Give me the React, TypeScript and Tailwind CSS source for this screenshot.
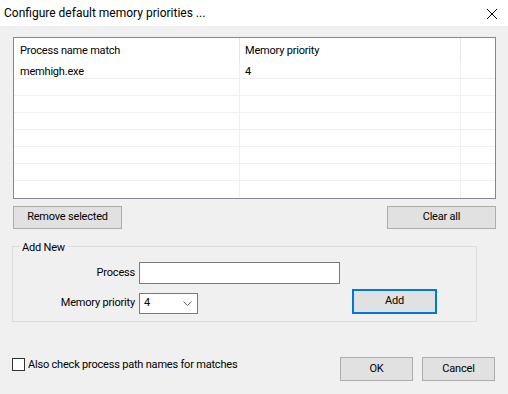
import React from "react";

const rows = [
  { name: "memhigh.exe", prio: "4" },
  { name: "", prio: "" },
  { name: "", prio: "" },
  { name: "", prio: "" },
  { name: "", prio: "" },
  { name: "", prio: "" },
  { name: "", prio: "" },
];

function Button({ label, className = "" }: { label: string; className?: string }) {
  return (
    <button
      className={`h-[23px] bg-[#e1e1e1] border border-[#adadad] text-black flex items-center justify-center ${className}`}
    >
      {label}
    </button>
  );
}

export default function App() {
  return (
    <div
      className="w-[508px] h-[394px] bg-[#f0f0f0] flex flex-col text-[11px] tracking-[-0.2px] text-black overflow-hidden"
      style={{ fontFamily: 'Roboto, "Noto Sans", sans-serif' }}
    >
      {/* Title bar */}
      <div className="h-[26px] bg-white flex items-center justify-between pl-[4px] pr-[10px] shrink-0">
        <span className="text-[12px] tracking-normal">Configure default memory priorities ...</span>
        <svg width="12" height="12" viewBox="0 0 12 12" className="mt-[1px]">
          <path d="M1 1 L11 11 M11 1 L1 11" stroke="#000" strokeWidth="1" />
        </svg>
      </div>

      {/* List view */}
      <div className="mt-[11px] ml-[13px] w-[483px] h-[162px] border border-[#828790] bg-white flex flex-col shrink-0">
        <div className="h-[24px] flex shrink-0">
          <div className="w-[226px] border-r border-[#e5e5e5] pl-[6px] pt-[3px] flex items-center">Process name match</div>
          <div className="w-[221px] border-r border-[#e5e5e5] pl-[5px] pt-[3px] flex items-center">Memory priority</div>
          <div className="flex-1" />
        </div>
        {rows.map((r, i) => (
          <div key={i} className="h-[17px] flex border-b border-[#f0f0f0] shrink-0">
            <div className="w-[226px] border-r border-[#f0f0f0] pl-[6px] pt-[2px] flex items-center leading-none">{r.name}</div>
            <div className="w-[221px] border-r border-[#f0f0f0] pl-[5px] pt-[2px] flex items-center leading-none">{r.prio}</div>
            <div className="flex-1" />
          </div>
        ))}
        <div className="flex flex-1">
          <div className="w-[226px] border-r border-[#f0f0f0]" />
          <div className="w-[221px] border-r border-[#f0f0f0]" />
          <div className="flex-1" />
        </div>
      </div>

      {/* List buttons */}
      <div className="mt-[7px] ml-[13px] w-[483px] flex justify-between shrink-0">
        <Button label="Remove selected" className="w-[109px]" />
        <Button label="Clear all" className="w-[109px]" />
      </div>

      {/* Add New group */}
      <fieldset className="mt-[8px] ml-[12px] w-[465px] h-[85px] border border-[#dcdcdc] shrink-0 px-0">
        <legend className="ml-[7px] px-[2px] pt-[4px] leading-[14px]">Add New</legend>
        <div className="flex flex-col mt-[7px]">
          <div className="flex items-center h-[22px]">
            <span className="w-[126px] text-right pr-[4px]">Process</span>
            <div className="w-[201px] h-[22px] bg-white border border-[#7a7a7a]" />
          </div>
          <div className="flex items-end mt-[5px]">
            <div className="flex items-center h-[21px]">
              <span className="w-[126px] text-right pr-[4px]">Memory priority</span>
              <div className="w-[59px] h-[21px] bg-white border border-[#7a7a7a] flex items-center justify-between pl-[4px] pr-[5px]">
                <span>4</span>
                <svg width="9" height="5" viewBox="0 0 9 5">
                  <path d="M0.5 0.5 L4.5 4.5 L8.5 0.5" stroke="#606060" strokeWidth="1" fill="none" />
                </svg>
              </div>
            </div>
            <button className="ml-[154px] w-[85px] h-[25px] bg-[#e1e1e1] border-2 border-[#0078d7] flex items-center justify-center">
              Add
            </button>
          </div>
        </div>
      </fieldset>

      {/* Footer */}
      <div className="mt-auto mb-[13px] ml-[12px] mr-[13px] flex items-start shrink-0">
        <div className="flex items-center flex-1 h-[15px]">
          <div className="w-[13px] h-[13px] bg-white border border-[#333333]" />
          <span className="ml-[3px] leading-[14px]">Also check process path names for matches</span>
        </div>
        <Button label="OK" className="w-[73px] h-[24px]" />
        <Button label="Cancel" className="w-[73px] h-[24px] ml-[9px]" />
      </div>
    </div>
  );
}
